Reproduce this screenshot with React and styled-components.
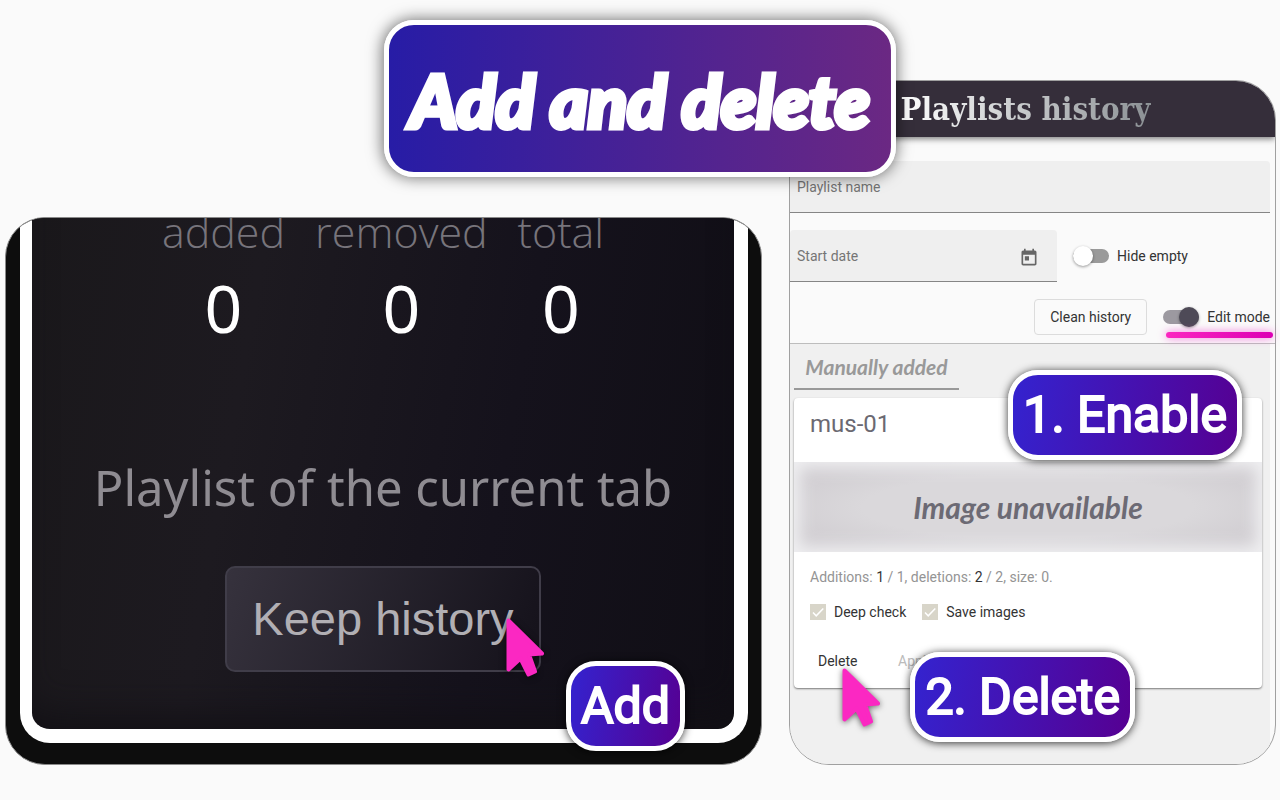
import React, { useState } from "react";
import styled, { createGlobalStyle } from "styled-components";

const GlobalStyle = createGlobalStyle`
  * {
    box-sizing: border-box;
  }

  body {
    margin: 0;
    background: #fafafa;
    font-family: Roboto, "Liberation Sans", sans-serif;
    font-size: 14px;
    color: #333;
  }

  button,
  input {
    font: inherit;
    color: inherit;
  }
`;

const Page = styled.main`
  position: relative;
  display: flex;
  align-items: flex-end;
  gap: 27px;
  min-height: 100vh;
  padding: 80px 4px 35px 5px;
`;

const Column = styled.section`
  position: relative;
  flex: ${(p) => p.$grow} 1 0;
  min-width: 0;
`;

const Banner = styled.h1`
  position: absolute;
  top: 20px;
  left: 50%;
  transform: translateX(-50%);
  z-index: 2;
  margin: 0;
  padding: 35px 21px 32px;
  border: 5px solid #fff;
  border-radius: 30px;
  background: linear-gradient(90deg, #271ca6, #6b2883);
  box-shadow: 0 0 16px rgba(0, 0, 0, 0.6);
  color: #fff;
  font: italic 900 72px/80px Lato, sans-serif;
  -webkit-text-stroke: 5px #fff;
  white-space: nowrap;
`;

const Badge = styled.div`
  position: absolute;
  right: ${(p) => p.$right}px;
  bottom: ${(p) => p.$bottom}px;
  z-index: 2;
  padding: 1px 10px 0;
  border: 5px solid #fff;
  border-radius: 30px;
  background: linear-gradient(100deg, #3423cf, #560092);
  box-shadow: 0 1px 8px rgba(0, 0, 0, 0.8);
  color: #fff;
  font-size: 50px;
  font-weight: 400;
  line-height: 79px;
  -webkit-text-stroke: 2px #fff;
  white-space: nowrap;
`;

const CursorSvg = styled.svg`
  position: absolute;
  left: ${(p) => p.$left}px;
  bottom: ${(p) => p.$bottom}px;
  z-index: 2;
  overflow: visible;
  filter: drop-shadow(0 1px 3px rgba(0, 0, 0, 0.6));
`;

/* popup panel */

const Popup = styled.div`
  padding: 0 13px 21px 14px;
  border: 1px solid #8a8a8a;
  border-radius: 40px;
  background: #0d0d0d;
  overflow: hidden;
`;

const PopupBody = styled.div`
  display: flex;
  flex-direction: column;
  align-items: center;
  padding-bottom: 57px;
  border: solid #fff;
  border-width: 0 14px 14px 12px;
  border-radius: 0 0 30px 30px;
  background: linear-gradient(100deg, #1a181b, #1d1a20 30%, #15121c 65%, #100e15);
  box-shadow: inset 0 -30px 40px -20px #121015;
`;

const Stats = styled.dl`
  display: flex;
  gap: 30px;
  margin: 0;
  font-family: "Open Sans", "Noto Sans", sans-serif;
`;

const Stat = styled.div`
  text-align: center;

  dt {
    height: 35px;
    font-size: 43px;
    font-weight: 300;
    line-height: 28px;
    color: #77747b;
  }

  dd {
    margin: 0;
    font-family: "Noto Sans", sans-serif;
    font-size: 66px;
    line-height: 108px;
    color: #fff;
  }
`;

const PopupTitle = styled.h2`
  margin: 86px 0 39px;
  color: #8f8c92;
  font: 400 49px/80px "Noto Sans", sans-serif;
  white-space: nowrap;
`;

const KeepButton = styled.button`
  padding: 0 25px;
  border: 2px solid #403d49;
  border-radius: 10px;
  background: linear-gradient(110deg, #36323d, #16131c 95%);
  color: #b1afb4;
  font: 47px/102px "Liberation Sans", Arial, sans-serif;
  white-space: nowrap;
`;

/* history panel */

const History = styled.div`
  border: 1px solid #a0a0a0;
  border-radius: 40px;
  background: #fafafa;
  overflow: hidden;
`;

const HistoryHeader = styled.header`
  display: flex;
  justify-content: center;
  padding-right: 14px;
  background: #352e3a;
  box-shadow: 0 2px 6px rgba(0, 0, 0, 0.5);

  h2 {
    margin: 0;
    font: 700 31px/56px "DejaVu Serif Condensed", "DejaVu Serif", serif;
    background: linear-gradient(90deg, #fff, #8b9094);
    background-clip: text;
    color: transparent;
    white-space: nowrap;
  }
`;

const Filters = styled.form`
  display: grid;
  gap: 17px;
  padding: 24px 5px 8px 0;
  border-bottom: 1px solid #bdbdbd;
`;

const Row = styled.div`
  display: flex;
  align-items: center;
  justify-content: ${(p) => (p.$end ? "flex-end" : "flex-start")};
  gap: 16px;
`;

const Field = styled.div`
  display: flex;
  align-items: center;
  flex: ${(p) => (p.$short ? "0 1 267px" : "1")};
  height: 52px;
  padding: 0 18px 0 7px;
  border-bottom: 1px solid #858585;
  border-radius: 4px 4px 0 0;
  background: #efefef;
  color: #757575;

  input {
    flex: 1;
    min-width: 0;
    border: 0;
    background: none;
    outline: none;
  }
`;

const IconButton = styled.button`
  display: flex;
  padding: 4px 0 0;
  border: 0;
  background: none;
`;

const SwitchLabel = styled.label`
  display: flex;
  align-items: center;
  gap: 8px;
  white-space: nowrap;

  input {
    display: flex;
    align-items: center;
    width: 36px;
    height: 14px;
    margin: 0;
    border-radius: 7px;
    background: #9a9a9a;
    appearance: none;
  }

  input::before {
    content: "";
    width: 20px;
    height: 20px;
    border-radius: 50%;
    background: #fff;
    box-shadow: 0 1px 3px rgba(0, 0, 0, 0.4);
  }

  input:checked {
    justify-content: flex-end;
    background: #9c99a0;
  }

  input:checked::before {
    background: #4e4a57;
  }
`;

const OutlineButton = styled.button`
  padding: 0 15px;
  border: 1px solid #dcdcdc;
  border-radius: 4px;
  background: none;
  line-height: 34px;
`;

const Underline = styled.div`
  position: absolute;
  top: 252px;
  right: 3px;
  width: 107px;
  height: 6px;
  border-radius: 3px;
  background: linear-gradient(90deg, #fb26c0, #dc00b4);
  box-shadow: 0 0 8px rgba(240, 30, 200, 0.6);
`;

const Results = styled.div`
  margin-right: 5px;
  padding: 2px 8px 76px 4px;
  background: #f0f0f0;
`;

const Tab = styled.button`
  display: block;
  width: 165px;
  margin-bottom: 8px;
  padding: 0;
  border: 0;
  border-bottom: 2px solid #999;
  background: none;
  color: #999;
  font: italic 700 21px/42px Lato, cursive;
`;

const Card = styled.article`
  border-radius: 4px;
  background: #fff;
  box-shadow: 0 1px 2px rgba(0, 0, 0, 0.5);

  h3 {
    margin: 0;
    padding: 10px 16px 22px;
    color: #6b6972;
    font-size: 24px;
    font-weight: 400;
    line-height: 32px;
  }
`;

const ImagePlaceholder = styled.div`
  background: radial-gradient(ellipse at center, #dad8db 50%, #cbc7cc);
  box-shadow: inset 0 0 16px 6px #f0f0f2;
  color: #6c6a74;
  font: italic 700 30px/90px Lato, cursive;
  text-align: center;
`;

const CardBody = styled.div`
  padding: 16px 16px 9px;
`;

const Summary = styled.p`
  margin: 0 0 16px;
  color: #949494;
  line-height: 18px;

  b {
    color: #333;
    font-weight: 400;
  }
`;

const CheckLabel = styled.label`
  display: flex;
  align-items: center;
  gap: 8px;
  line-height: 20px;
`;

const CheckBox = styled.span`
  display: grid;
  width: 16px;
  height: 16px;
  background: #d8d5c9;

  input,
  svg {
    grid-area: 1 / 1;
    width: 16px;
    height: 16px;
    margin: 0;
    appearance: none;
    pointer-events: none;
  }

  input:not(:checked) + svg {
    visibility: hidden;
  }
`;

const Actions = styled.div`
  display: flex;
  gap: 24px;
  margin-top: 21px;
`;

const TextButton = styled.button`
  min-width: 56px;
  padding: 0 8px;
  border: 0;
  background: none;
  line-height: 36px;
  text-align: left;

  &:disabled {
    color: #bbb;
  }
`;

const stats = [
  { name: "added", value: 0 },
  { name: "removed", value: 0 },
  { name: "total", value: 0 },
];

const Cursor = ({ left, bottom }) => (
  <CursorSvg $left={left} $bottom={bottom} width="39" height="60" aria-hidden="true">
    <path
      d="M2.5 2.5 36 35.5 23 36.5 29 53.5 22.5 56.5 14.5 40.5 2.5 51.5Z"
      fill="#fb28c2"
      stroke="#fb28c2"
      strokeWidth="4"
      strokeLinejoin="round"
    />
  </CursorSvg>
);

const CalendarIcon = () => (
  <svg width="20" height="20" viewBox="0 0 24 24" fill="#666" aria-hidden="true">
    <path d="M19 3h-1V1h-2v2H8V1H6v2H5c-1.11 0-1.99.9-1.99 2L3 19c0 1.1.89 2 2 2h14c1.1 0 2-.9 2-2V5c0-1.1-.9-2-2-2zm0 16H5V8h14v11zM7 10h5v5H7z" />
  </svg>
);

const Switch = ({ label, initial }) => {
  const [on, setOn] = useState(initial);

  return (
    <SwitchLabel>
      <input
        type="checkbox"
        role="switch"
        checked={on}
        onChange={() => setOn(!on)}
      />
      {label}
    </SwitchLabel>
  );
};

const Check = ({ label }) => {
  const [checked, setChecked] = useState(true);

  return (
    <CheckLabel>
      <CheckBox>
        <input
          type="checkbox"
          checked={checked}
          onChange={() => setChecked(!checked)}
        />
        <svg viewBox="0 0 16 16" fill="none" stroke="#fff" strokeWidth="1.5">
          <path d="M3 8.5 6.2 11.8 13.3 4.5" />
        </svg>
      </CheckBox>
      {label}
    </CheckLabel>
  );
};

const App = () => {
  return (
    <Page>
      <GlobalStyle />
      <Banner>Add and delete</Banner>

      <Column $grow={757}>
        <Popup>
          <PopupBody>
            <Stats>
              {stats.map((stat) => (
                <Stat key={stat.name}>
                  <dt>{stat.name}</dt>
                  <dd>{stat.value}</dd>
                </Stat>
              ))}
            </Stats>
            <PopupTitle>Playlist of the current tab</PopupTitle>
            <KeepButton type="button">Keep history</KeepButton>
          </PopupBody>
        </Popup>
        <Cursor left={501} bottom={87} />
        <Badge $right={77} $bottom={14}>
          Add
        </Badge>
      </Column>

      <Column $grow={487}>
        <History>
          <HistoryHeader>
            <h2>Playlists history</h2>
          </HistoryHeader>
          <Filters>
            <Row>
              <Field>
                <label htmlFor="playlist-name">Playlist name</label>
                <input id="playlist-name" type="text" />
              </Field>
            </Row>
            <Row>
              <Field $short>
                <label htmlFor="start-date">Start date</label>
                <input id="start-date" type="text" />
                <IconButton type="button" aria-label="Open calendar">
                  <CalendarIcon />
                </IconButton>
              </Field>
              <Switch label="Hide empty" initial={false} />
            </Row>
            <Row $end>
              <OutlineButton type="button">Clean history</OutlineButton>
              <Switch label="Edit mode" initial={true} />
            </Row>
          </Filters>
          <Results>
            <Tab type="button">Manually added</Tab>
            <Card>
              <h3>mus-01</h3>
              <ImagePlaceholder>Image unavailable</ImagePlaceholder>
              <CardBody>
                <Summary>
                  Additions: <b>1</b> / 1, deletions: <b>2</b> / 2, size: 0.
                </Summary>
                <Row>
                  <Check label="Deep check" />
                  <Check label="Save images" />
                </Row>
                <Actions>
                  <TextButton type="button">Delete</TextButton>
                  <TextButton type="button" disabled>
                    Apply
                  </TextButton>
                </Actions>
              </CardBody>
            </Card>
          </Results>
        </History>
        <Underline />
        <Badge $right={34} $bottom={305}>
          1. Enable
        </Badge>
        <Cursor left={53} bottom={37} />
        <Badge $right={141} $bottom={23}>
          2. Delete
        </Badge>
      </Column>
    </Page>
  );
};

export default App;
